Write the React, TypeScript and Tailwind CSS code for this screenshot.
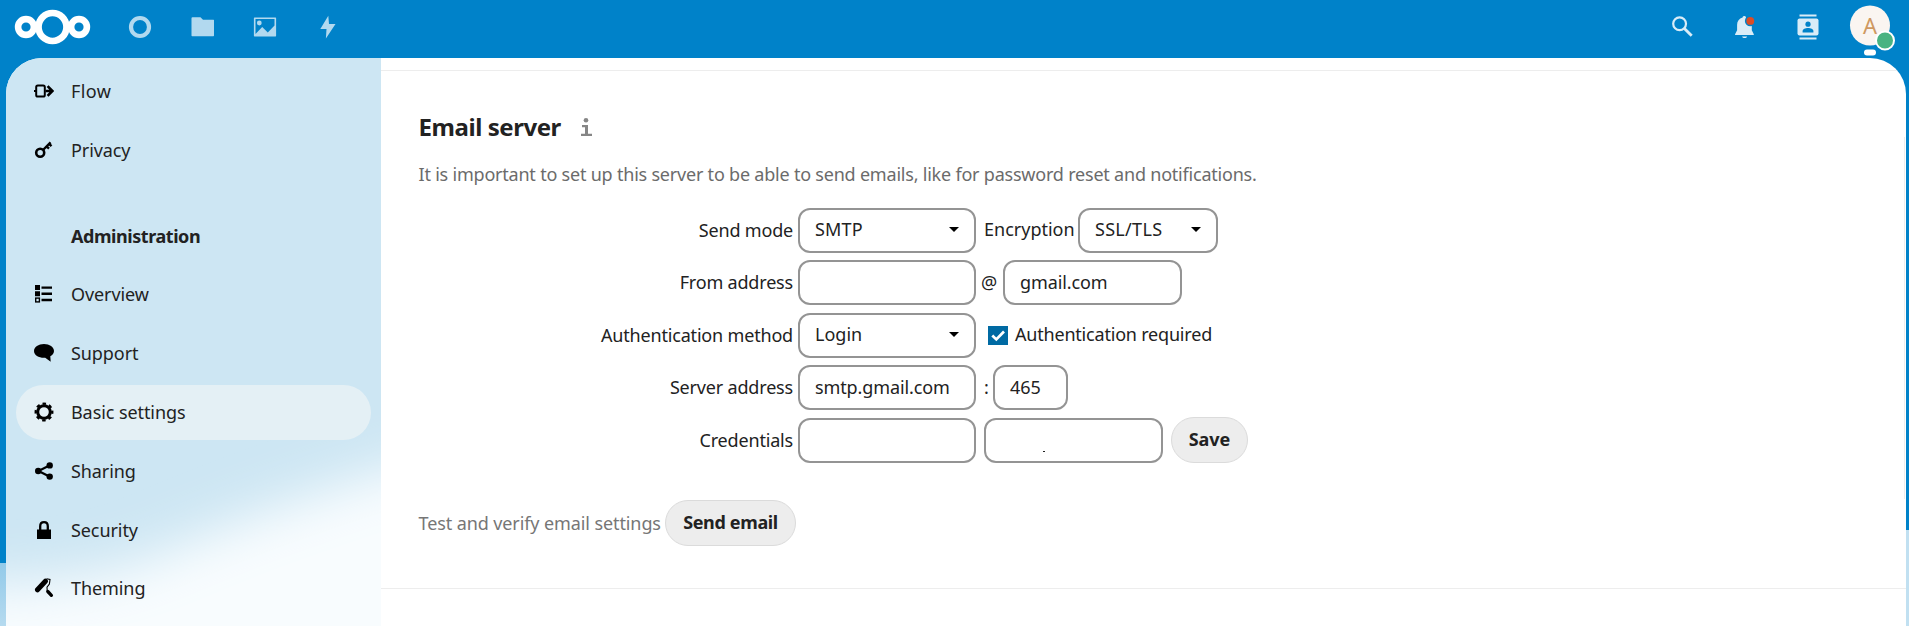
import React from "react";

type IconProps = { children: React.ReactNode; className?: string; viewBox?: string };

function Svg({ children, className = "h-6 w-6", viewBox = "0 0 24 24" }: IconProps) {
  return (
    <svg className={className} viewBox={viewBox} fill="currentColor" aria-hidden="true">
      {children}
    </svg>
  );
}

const navIcons: Record<string, React.ReactNode> = {
  Flow: (
    <>
      <rect x="2.2" y="4.4" width="8.6" height="11.2" rx="1.6" fill="none" stroke="currentColor" strokeWidth="2" />
      <path d="M0 9h2.5v2H0z" />
      <path d="M11.5 10H18.500M13.600 5.200 18.400 10l-4.800 4.800" fill="none" stroke="currentColor" strokeWidth="2.600" />
    </>
  ),
  Privacy: (
    <>
      <circle cx="6.2" cy="12.8" r="4" fill="none" stroke="currentColor" strokeWidth="2.6" />
      <path d="M9 10l7.600-7.600M12.400 6.200l2.600 2.400M14.800 3.600l2.700 2.500" fill="none" stroke="currentColor" strokeWidth="2.400" />
    </>
  ),
  Overview: (
    <>
      <path d="M1 1h5v5H1zM1 7.200h5v5H1zM7.500 2.400H18v2.400H7.500zM7.500 8.600H18V11H7.500zM7.500 14.800H18v2.400H7.500z" />
      <rect x="1.700" y="14.100" width="3.700" height="3.800" fill="none" stroke="currentColor" strokeWidth="1.400" />
    </>
  ),
  Support: <path d="M10 1C4.500 1 0 4 0 7.900s4.500 6.900 10 6.900l1.200-.1 5.500 4.100-.4-5.500C18.600 12 20 10.100 20 7.900 20 4 15.500 1 10 1z" />,
  "Basic settings": (
    <>
      <circle cx="10" cy="10" r="6.300" fill="none" stroke="currentColor" strokeWidth="3" />
      <circle cx="10" cy="10" r="8.300" fill="none" stroke="currentColor" strokeWidth="2.300" strokeDasharray="3.500 3.020" strokeDashoffset="1.750" />
    </>
  ),
  Sharing: (
    <>
      <path d="M15.400 4.600 4.500 10l10.900 5.600" fill="none" stroke="currentColor" strokeWidth="2.200" />
      <circle cx="4.200" cy="10" r="3.200" />
      <circle cx="15.700" cy="4.400" r="3.200" />
      <circle cx="15.700" cy="15.600" r="3.200" />
    </>
  ),
  Security: (
    <>
      <path d="M3 9.500h14v9.500H3z" />
      <path d="M6.200 10V6.200C6.200 3.400 7.700 2.200 10 2.200s3.800 1.200 3.800 4V10" fill="none" stroke="currentColor" strokeWidth="2.300" />
    </>
  ),
  Theming: (
    <>
      <path d="M3.500 11.800 11.400 3.200" fill="none" stroke="currentColor" strokeWidth="5" strokeLinecap="round" />
      <path d="M12.500.8l3.500.7-.6 4.500-2.400 3.200.2 3.600 1.200 1.300" fill="none" stroke="currentColor" strokeWidth="1.100" />
      <path d="M13.800 13.500l3.600 3.800" fill="none" stroke="currentColor" strokeWidth="3.300" strokeLinecap="round" />
    </>
  ),
};

function NavItem({ label, active = false }: { label: string; active?: boolean }) {
  return (
    <li className="flex h-[58.8px] items-center px-[10px]">
      <a
        className={
          active
            ? "flex h-[55px] w-full items-center rounded-full bg-[#e4f0f5] pl-[18px]"
            : "flex h-[55px] w-full items-center rounded-full pl-[18px]"
        }
      >
        <Svg className="h-5 w-5 text-black" viewBox="0 0 20 20">{navIcons[label]}</Svg>
        <span className={label === "Flow" ? "ml-[17px] tracking-[0.4px]" : "ml-[17px] tracking-[-0.08px]"}>{label}</span>
      </a>
    </li>
  );
}

function Header() {
  return (
    <header className="flex h-[58px] shrink-0 items-start justify-between">
      <div className="flex h-[53px] items-center text-[#b2d9ef]">
        <svg className="ml-[14px] h-9 w-[77px]" viewBox="0 0 77 36" fill="none" stroke="#fff">
          <circle cx="38.500" cy="18" r="14" strokeWidth="6.700" />
          <circle cx="12" cy="18" r="7.900" strokeWidth="6.600" />
          <circle cx="65" cy="18" r="7.900" strokeWidth="6.600" />
        </svg>
        <Svg className="ml-[36.500px] h-6 w-6">
          <circle cx="12" cy="12" r="9" fill="none" stroke="currentColor" strokeWidth="4.200" />
        </Svg>
        <Svg className="ml-[39px] h-6 w-6">
          <path d="M1.500 2.300h8l2.500 2.500h10.500q.5 0 .5.500v15.300q0 .7-.7.700H1.200q-.7 0-.7-.7V3.300q0-1 1-1z" />
        </Svg>
        <Svg className="ml-[38px] h-6 w-6">
          <path fillRule="evenodd" d="M1.500 2.400h21q.6 0 .6.600v17.800q0 .6-.6.600h-21q-.6 0-.6-.6V3q0-.6.600-.6zM2.500 4v15l6.700-7 5.600 5.400L21.500 10.500V4z" />
          <circle cx="6.300" cy="8" r="2.400" />
        </Svg>
        <Svg className="ml-[39px] h-6 w-6">
          <path d="M12.300.7 4.300 14h6.200l-.6 9.500L19.500 9h-6.500z" />
        </Svg>
      </div>
      <div className="flex h-[53px] items-center text-[#d9ecf7]">
        <Svg className="h-6 w-6">
          <circle cx="9.600" cy="8.700" r="6.400" fill="none" stroke="currentColor" strokeWidth="2.200" />
          <path d="M14.100 13.200l7.600 7.600" fill="none" stroke="currentColor" strokeWidth="2.900" />
        </Svg>
        <Svg className="ml-[39px] h-6 w-6">
          <path d="M11.500 1c1 0 1.500.8 1.600 1.900l5.700 6v6.400l1.900 3.600q.6 1-.3 1H2.500q-1 0-.3-1L4.100 15.300V9.700c0-3.600 2-6 5.500-7.200.1-1 .8-1.500 1.900-1.500zM9.100 21.400h5c-.5 2-4.500 2-5 0z" />
          <circle cx="17.300" cy="5.900" r="5.400" fill="#0082c9" />
          <circle cx="17.300" cy="5.900" r="3.900" fill="#db4c25" />
        </Svg>
        <Svg className="ml-[39px] h-[26px] w-6" viewBox="0 0 24 26">
          <path d="M3.500.5h17v2h-17zM3.500 23.400h17v2h-17z" />
          <rect x="1.500" y="4.500" width="21" height="17" rx="2" />
          <circle cx="12" cy="10.200" r="2.600" fill="#0082c9" />
          <path d="M6.600 18.400v-1.300c0-4 10.800-4 10.800 0v1.300z" fill="#0082c9" />
        </Svg>
        <div className="relative ml-[30px] mr-[19px] flex h-10 w-10 -translate-y-[1.500px] items-center justify-center rounded-full bg-[#faf5f1] pb-[2px] text-[22px] text-[#cf9960]">
          A
          <span className="absolute -right-[5px] top-[25px] h-5 w-5 rounded-full border-2 border-white bg-[#49b382]" />
          <span className="absolute left-[14px] top-11 h-[6px] w-3 rounded-full bg-white" />
        </div>
      </div>
    </header>
  );
}

function Box({ className, children, select = false }: { className: string; children?: React.ReactNode; select?: boolean }) {
  return (
    <div className={"relative flex h-[45px] shrink-0 items-center rounded-[12px] border-2 border-[#949494] bg-white pb-[2px] pl-[15px] " + className}>
      <span>{children}</span>
      {select && (
        <svg className="ml-auto mr-[15px] h-[5px] w-[10px]" viewBox="0 0 10 5">
          <path d="M0 0h10L5 5z" />
        </svg>
      )}
    </div>
  );
}

function Row({ label, children }: { label: string; children: React.ReactNode }) {
  return (
    <div className="flex h-[52.500px] items-start">
      <div className="flex h-[45px] w-[375px] items-center justify-end pb-[1.500px] tracking-[-0.18px]">{label}</div>
      <div className="ml-[5px] flex h-[45px] items-center">{children}</div>
    </div>
  );
}

function Button({ className, children }: { className: string; children: React.ReactNode }) {
  return (
    <button className={"flex h-[46px] shrink-0 items-center justify-center rounded-full border border-[#dbdbdb] bg-[#ededed] pb-[2px] font-bold " + className}>
      {children}
    </button>
  );
}

export default function App() {
  return (
    <div className="relative flex h-[626px] w-full flex-col overflow-hidden bg-[#0082c9] font-['Noto_Sans',sans-serif] text-[18px] leading-6 text-[#222222]">
      <div className="absolute left-0 top-[563px] h-[63px] w-[6px] bg-linear-to-b from-[#92cae9] to-[#b5daef]" />
      <div className="absolute right-0 top-[530px] h-24 w-[3px] bg-[#c1e0f1]" />
      <Header />
      <div className="relative ml-[6px] mr-[3px] flex min-h-0 flex-1 overflow-hidden rounded-t-[36px] bg-white">
        <aside className="relative w-[375px] shrink-0 overflow-hidden bg-[#cde6f3]">
          <svg className="absolute inset-0 h-full w-full" viewBox="0 0 375 568">
            <defs>
              <filter id="haze" x="-50%" y="-50%" width="200%" height="200%">
                <feGaussianBlur stdDeviation="26" />
              </filter>
            </defs>
            <path d="M-100 525 C40 528 90 520 150 497 C230 462 300 435 500 375 V700 H-100z" fill="#f8fcfe" filter="url(#haze)" />
          </svg>
          <nav className="relative pt-[3.500px]">
            <ul>
              <NavItem label="Flow" />
              <NavItem label="Privacy" />
            </ul>
            <h2 className="mt-[45px] pl-[65px] font-bold leading-[24px] tracking-[-0.44px]">Administration</h2>
            <ul className="mt-[17px]">
              <NavItem label="Overview" />
              <NavItem label="Support" />
              <NavItem label="Basic settings" active />
              <NavItem label="Sharing" />
              <NavItem label="Security" />
              <NavItem label="Theming" />
            </ul>
          </nav>
        </aside>
        <main className="relative flex-1">
          <div className="h-[13px] border-b border-[#ededed]" />
          <section className="h-[518px] border-b border-[#ededed] pl-[37.500px] pt-[40px]">
            <div className="flex h-8 items-center">
              <h2 className="text-[24px] font-bold leading-8 tracking-[-0.44px]">Email server</h2>
              <svg className="ml-[20px] h-[18px] w-[11px] text-[#868686]" viewBox="0 0 11 18" fill="currentColor">
                <circle cx="5" cy="2.300" r="2.300" />
                <path d="M1 7h6v8.800h4V18H0v-2.200h4V9.200H1z" />
              </svg>
            </div>
            <p className="mt-[19px] tracking-[-0.210px] text-[#6b6b6b]">It is important to set up this server to be able to send emails, like for password reset and notifications.</p>
            <div className="-ml-[0.500px] mt-[21.800px]">
              <Row label="Send mode">
                <Box className="w-[178px] tracking-[0.2px]" select>SMTP</Box>
                <span className="ml-[8px] w-[90px] pb-[2px]">Encryption</span>
                <Box className="ml-[4px] w-[140px] tracking-[0.3px]" select>SSL/TLS</Box>
              </Row>
              <Row label="From address">
                <Box className="w-[178px]" />
                <span className="ml-[5px] w-[18px] pb-[1px]">@</span>
                <Box className="ml-[4px] w-[179px] pb-[1px] tracking-[-0.1px]">gmail.com</Box>
              </Row>
              <Row label="Authentication method">
                <Box className="w-[178px]" select>Login</Box>
                <span className="ml-[12px] flex h-[19px] w-5 items-center justify-center bg-[#006aa3]">
                  <svg className="h-[19px] w-5" viewBox="0 0 20 19" fill="none" stroke="#fff" strokeWidth="2.700">
                    <path d="M4.300 9.500 8.300 13.400 16 5.500" />
                  </svg>
                </span>
                <span className="ml-[7px] pb-[2px] tracking-[-0.2px]">Authentication required</span>
              </Row>
              <Row label="Server address">
                <Box className="w-[178px] pb-[1px] tracking-[-0.12px]">smtp.gmail.com</Box>
                <span className="ml-[8px] w-[5px] pb-[1px]">:</span>
                <Box className="ml-[4px] w-[75px] pb-[1px]">465</Box>
              </Row>
              <Row label="Credentials">
                <Box className="w-[178px]" />
                <Box className="ml-[8px] w-[179px]">
                  <i className="absolute left-[57px] top-[31px] block h-px w-[2px] bg-[#222222]" />
                </Box>
                <Button className="ml-[8px] w-[77px]">Save</Button>
              </Row>
            </div>
            <div className="mt-[30px] flex items-center">
              <span className="w-[242.500px] whitespace-nowrap pb-[1px] tracking-[-0.1px] text-[#767676]">Test and verify email settings</span>
              <Button className="ml-[4px] w-[131px] pb-[1px] tracking-[-0.35px]">Send email</Button>
            </div>
          </section>
          <div className="absolute right-[1px] top-[79px] h-[362px] w-px bg-[#ededed]" />
        </main>
      </div>
    </div>
  );
}
